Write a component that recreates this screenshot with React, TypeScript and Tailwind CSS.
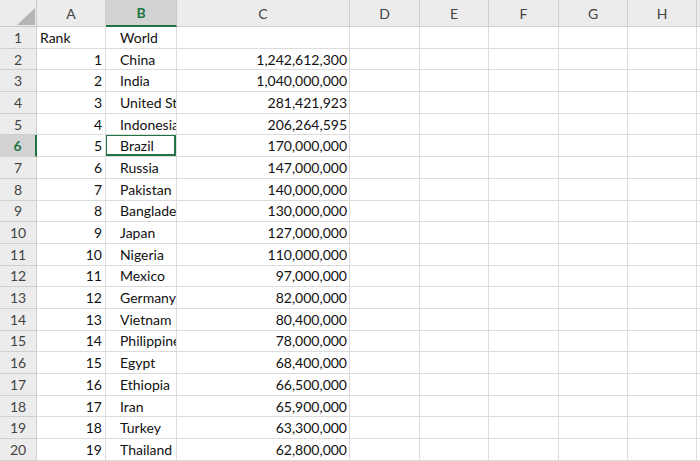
import React from "react";

const cols = ["A", "B", "C", "D", "E", "F", "G", "H"];

const data: [string, string, string][] = [
  ["Rank", "World", ""],
  ["1", "China", "1,242,612,300"],
  ["2", "India", "1,040,000,000"],
  ["3", "United States", "281,421,923"],
  ["4", "Indonesia", "206,264,595"],
  ["5", "Brazil", "170,000,000"],
  ["6", "Russia", "147,000,000"],
  ["7", "Pakistan", "140,000,000"],
  ["8", "Bangladesh", "130,000,000"],
  ["9", "Japan", "127,000,000"],
  ["10", "Nigeria", "110,000,000"],
  ["11", "Mexico", "97,000,000"],
  ["12", "Germany", "82,000,000"],
  ["13", "Vietnam", "80,400,000"],
  ["14", "Philippines", "78,000,000"],
  ["15", "Egypt", "68,400,000"],
  ["16", "Ethiopia", "66,500,000"],
  ["17", "Iran", "65,900,000"],
  ["18", "Turkey", "63,300,000"],
  ["19", "Thailand", "62,800,000"],
];

const cell =
  "border-r border-b border-[#dcdcdc] overflow-hidden whitespace-nowrap flex items-center";

export default function App() {
  return (
    <div
      className="w-[700px] h-[461px] overflow-hidden bg-white text-[14px] text-[#111]"
      style={{ fontFamily: "Lato, 'Open Sans', sans-serif" }}
    >
      <div className="grid grid-cols-[37px_69px_71px_173px_70px_69px_70px_69px_69px_1fr] grid-rows-[27px_repeat(20,21.7px)]">
        {/* header row */}
        <div className="relative bg-[#ececec] border-r border-b border-[#c8c8c8]">
          <svg className="absolute left-[17px] top-[8px]" width="18" height="17" viewBox="0 0 18 17">
            <polygon points="0,17 18,17 18,0" fill="#b5b5b5" />
          </svg>
        </div>
        {cols.map((c) =>
          c === "B" ? (
            <div
              key={c}
              className="bg-[#d3d3d3] border-r border-[#c8c8c8] border-b-2 border-b-[#217346] flex items-center justify-center font-bold text-[#217346]"
            >
              {c}
            </div>
          ) : (
            <div
              key={c}
              className="bg-[#ececec] border-r border-b border-[#d0d0d0] flex items-center justify-center text-[#444]"
            >
              {c}
            </div>
          )
        )}
        <div className="bg-[#ececec] border-b border-[#d0d0d0]" />

        {data.map((row, i) => {
          const r = i + 1;
          const sel = r === 6;
          return (
            <React.Fragment key={r}>
              {sel ? (
                <div className="bg-[#d3d3d3] border-b border-[#d0d0d0] border-r-2 border-r-[#217346] flex items-center justify-center font-bold text-[#217346]">
                  {r}
                </div>
              ) : (
                <div className="bg-[#ececec] border-r border-b border-[#d0d0d0] flex items-center justify-center text-[#444]">
                  {r}
                </div>
              )}
              <div className={`${cell} ${i === 0 ? "justify-start pl-[3px]" : "justify-end pr-[3px]"}`}>
                {row[0]}
              </div>
              <div className={`${cell} relative pl-[14px]`}>
                {row[1]}
                {sel && (
                  <div className="absolute left-[-1px] top-[-1px] right-0 bottom-0 border-2 border-[#217346]" />
                )}
              </div>
              <div className={`${cell} justify-end pr-[2px]`}>{row[2]}</div>
              <div className={cell} />
              <div className={cell} />
              <div className={cell} />
              <div className={cell} />
              <div className={cell} />
              <div className="border-b border-[#dcdcdc]" />
            </React.Fragment>
          );
        })}
      </div>
    </div>
  );
}
